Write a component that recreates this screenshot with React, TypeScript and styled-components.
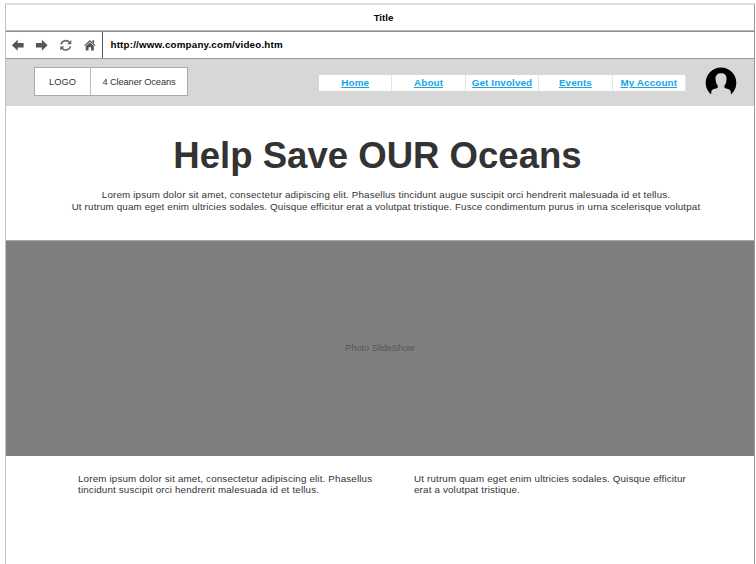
import React from "react";
import styled, { createGlobalStyle } from "styled-components";

const Global = createGlobalStyle`
  * { box-sizing: border-box; }
  html, body { margin: 0; padding: 0; background: #fff; overflow: hidden; }
  body { font-family: "Liberation Sans", Arial, sans-serif; color: #333; }
`;

const Page = styled.div`
  width: 756px;
  height: 564px;
  padding: 3px 1px 0 5px;
  overflow: hidden;
`;

const Browser = styled.div`
  height: 561px;
  display: flex;
  flex-direction: column;
  border-top: 2px solid #dfdfdf;
  border-left: 1px solid #c2c2c2;
  border-right: 1px solid #999;
`;

const TitleBar = styled.div`
  height: 27px;
  display: flex;
  align-items: center;
  justify-content: center;
  padding: 0 0 1px 7px;
  border-bottom: 1px solid #8e8e8e;
  box-shadow: inset 0 -1px #b8b8b8;
  color: #000;
  font-size: 9.7px;
  font-weight: 700;
`;

const AddressBar = styled.div`
  height: 27px;
  display: flex;
  border-bottom: 1px solid #999;
`;

const Tools = styled.div`
  width: 97px;
  display: flex;
  border-right: 1px solid #555;
`;

const ToolIcon = styled.svg`
  display: block;
  width: 97px;
  height: 26px;
`;

const Url = styled.div`
  padding-left: 7.5px;
  line-height: 26px;
  color: #000;
  font-size: 9.8px;
  font-weight: 700;
  letter-spacing: 0.18px;
`;

const Header = styled.header`
  height: 47px;
  display: flex;
  align-items: flex-start;
  background: #d7d7d7;
`;

const Brand = styled.div`
  display: flex;
  width: 154px;
  height: 29px;
  margin: 8px 0 0 28px;
  border: 1px solid #aaa;
  background: #fff;
`;

const BrandCell = styled.div<{ $width: number; $divided?: boolean }>`
  width: ${(p) => p.$width}px;
  border-right: ${(p) => (p.$divided ? "1px solid #bbb" : "0")};
  text-align: center;
  font-size: 9.3px;
  letter-spacing: ${(p) => (p.$divided ? 0 : -0.11)}px;
  line-height: 28px;
  white-space: nowrap;
`;

const Nav = styled.nav`
  display: flex;
  margin: 16px 0 0 131px;
`;

const NavItem = styled.a`
  width: 73.4px;
  height: 16px;
  border-right: 1px solid #e4e4e4;
  background: #fff;
  color: #16a5e6;
  font-size: 9.9px;
  font-weight: 700;
  letter-spacing: 0.1px;
  line-height: 16px;
  text-align: center;
  text-decoration: underline;
  white-space: nowrap;
`;

const Avatar = styled.svg`
  display: block;
  width: 32px;
  height: 30px;
  margin: 8px 0 0 19.4px;
`;

const Hero = styled.section`
  height: 134px;
  padding-top: 27px;
  text-align: center;
`;

const Heading = styled.h1`
  margin: 0;
  padding-right: 5px;
  font-size: 36.55px;
  line-height: 46px;
  white-space: nowrap;
`;

const Intro = styled.p`
  margin: 10px 0 0;
  padding-left: 12px;
  font-size: 9.8px;
  letter-spacing: 0.154px;
  line-height: 12px;
  white-space: nowrap;
`;

const SlideShow = styled.section`
  height: 216px;
  border-top: 1px solid #a8a8a8;
  background: #7f7f7f;
  color: #555;
  font-size: 9.1px;
  line-height: 214px;
  text-align: center;
`;

const Columns = styled.section`
  display: grid;
  grid-template-columns: 336px 300px;
  padding: 17px 0 0 72px;
`;

const Column = styled.p`
  margin: 0;
  font-size: 9.8px;
  letter-spacing: 0.16px;
  line-height: 11px;
  white-space: nowrap;
`;

const links = ["Home", "About", "Get Involved", "Events", "My Account"];

export default function App() {
  return (
    <Page>
      <Global />
      <Browser>
        <TitleBar>Title</TitleBar>
        <AddressBar>
          <Tools>
            <ToolIcon viewBox="0 0 97 26" fill="#555">
              <path d="M6 13.2 11.8 7.8V11H17.8V15.5H11.8V18.7Z" />
              <path d="M42 13.2 36.2 7.8V11H30.2V15.5H36.2V18.7Z" />
              <g fill="none" stroke="#666" strokeWidth="1.6">
                <path d="M55.6 12.2A5 5 0 0 1 64.4 10.6" />
                <path d="M65.2 14.4A5 5 0 0 1 56.4 16" />
              </g>
              <path d="M66 8V12.2H61.8ZM54.8 18.5V14.4H59Z" fill="#666" />
              <path d="M84.7 8 90.3 13.2 89.6 14 84.7 9.7 79.8 14 79.1 13.2ZM87.3 8.2H89V11.5L87.3 10ZM84.7 10.6 88.8 14.1V18.5H86V15.2H83.4V18.5H80.6V14.1Z" />
            </ToolIcon>
          </Tools>
          <Url>http://www.company.com/video.htm</Url>
        </AddressBar>
        <Header>
          <Brand>
            <BrandCell $width={56} $divided>LOGO</BrandCell>
            <BrandCell $width={96}>4 Cleaner Oceans</BrandCell>
          </Brand>
          <Nav>
            {links.map((label) => (
              <NavItem key={label}>{label}</NavItem>
            ))}
          </Nav>
          <Avatar viewBox="0 0 32 30">
            <path
              fill="#000"
              d="M6 27.5A15.3 15.3 0 1 1 26 27.5L25.5 23.8Q25 22.5 23 22.1L19.5 21V18.2C21 17 21.3 15 21.5 12.5C21.8 8.5 20 6.2 16.1 6.2S10.2 8.5 10.6 12.5C10.8 15 11.2 17 12.7 18.2V21L9 22.1Q7 22.5 6.5 23.8Z"
            />
          </Avatar>
        </Header>
        <Hero>
          <Heading>Help Save OUR Oceans</Heading>
          <Intro>
            Lorem ipsum dolor sit amet, consectetur adipiscing elit. Phasellus tincidunt augue suscipit orci hendrerit malesuada id et tellus.
            <br />
            Ut rutrum quam eget enim ultricies sodales. Quisque efficitur erat a volutpat tristique. Fusce condimentum purus in urna scelerisque volutpat
          </Intro>
        </Hero>
        <SlideShow>Photo SlideShow</SlideShow>
        <Columns>
          <Column>
            Lorem ipsum dolor sit amet, consectetur adipiscing elit. Phasellus
            <br />
            tincidunt suscipit orci hendrerit malesuada id et tellus.
          </Column>
          <Column>
            Ut rutrum quam eget enim ultricies sodales. Quisque efficitur
            <br />
            erat a volutpat tristique.
          </Column>
        </Columns>
      </Browser>
    </Page>
  );
}
